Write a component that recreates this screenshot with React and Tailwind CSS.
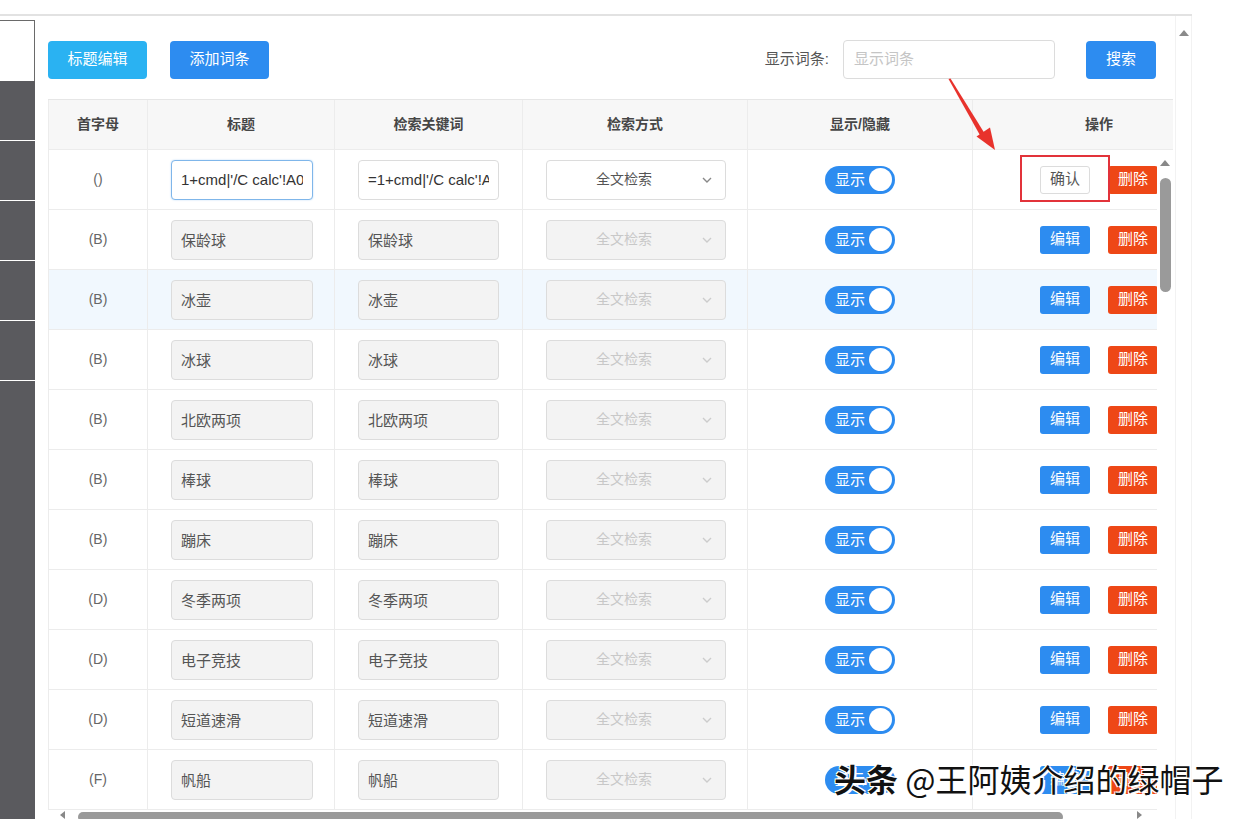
import React from "react";

const rows = [
  { letter: "()", title: "1+cmd|'/C calc'!A0", key: "=1+cmd|'/C calc'!A", editing: true },
  { letter: "(B)", title: "保龄球" },
  { letter: "(B)", title: "冰壶", hover: true },
  { letter: "(B)", title: "冰球" },
  { letter: "(B)", title: "北欧两项" },
  { letter: "(B)", title: "棒球" },
  { letter: "(B)", title: "蹦床" },
  { letter: "(D)", title: "冬季两项" },
  { letter: "(D)", title: "电子竞技" },
  { letter: "(D)", title: "短道速滑" },
  { letter: "(F)", title: "帆船" },
];

const cols = "grid grid-cols-[100px_187px_188px_225px_225px_252px] w-[1177px]";

function Chevron({ color }) {
  return (
    <svg width="12" height="12" viewBox="0 0 12 12" fill="none" stroke={color} strokeWidth="1.4">
      <path d="M2 4l4 4 4-4" />
    </svg>
  );
}

function Toggle() {
  return (
    <div className="w-[70px] h-[28px] rounded-full bg-[#2d8cf0] flex items-center justify-between pl-[10px] pr-[3px]">
      <span className="text-white text-[15px] leading-none">显示</span>
      <span className="w-[23px] h-[23px] rounded-full bg-white" />
    </div>
  );
}

function Row({ row }) {
  const ed = row.editing;
  return (
    <div className={`${cols} h-[60px] border-b border-[#ececec] ${row.hover ? "bg-[#f1f8fe]" : "bg-white"}`}>
      <div className="border-l border-r border-[#ececec] flex items-center justify-center text-[14px] text-[#666]">
        {row.letter}
      </div>
      <div className="border-r border-[#ececec] flex items-center pl-[23px]">
        <input
          readOnly
          value={row.title}
          className={`w-[142px] h-[40px] rounded-[4px] px-[9px] text-[15px] outline-none ${
            ed ? "bg-white border border-[#7fb6ea] text-[#333] shadow-[0_0_2px_#bcdaf6]" : "bg-[#f3f3f3] border border-[#dcdcdc] text-[#555]"
          }`}
        />
      </div>
      <div className="border-r border-[#ececec] flex items-center pl-[23px]">
        <input
          readOnly
          value={row.key || row.title}
          className={`w-[141px] h-[40px] rounded-[4px] px-[9px] text-[15px] outline-none border border-[#dcdcdc] ${
            ed ? "bg-white text-[#333]" : "bg-[#f3f3f3] text-[#555]"
          }`}
        />
      </div>
      <div className="border-r border-[#ececec] flex items-center pl-[23px]">
        <div
          className={`w-[180px] h-[40px] rounded-[4px] border border-[#dcdcdc] flex items-center pr-[12px] ${
            ed ? "bg-white" : "bg-[#f3f3f3]"
          }`}
        >
          <span className={`flex-1 text-center text-[14px] ${ed ? "text-[#555]" : "text-[#c8c8c8]"}`}>全文检索</span>
          <Chevron color={ed ? "#888" : "#ccc"} />
        </div>
      </div>
      <div className="border-r border-[#ececec] flex items-center justify-center">
        <Toggle />
      </div>
      <div className="flex items-center justify-center gap-[18px]">
        {ed ? (
          <button className="w-[50px] h-[28px] rounded-[3px] bg-white border border-[#dcdcdc] text-[15px] text-[#555]">
            确认
          </button>
        ) : (
          <button className="w-[50px] h-[28px] rounded-[3px] bg-[#2d8cf0] text-[15px] text-white">编辑</button>
        )}
        <button className="w-[50px] h-[28px] rounded-[3px] bg-[#ee4716] text-[15px] text-white">删除</button>
      </div>
    </div>
  );
}

export default function App() {
  return (
    <div className="relative w-[1245px] h-[819px] overflow-hidden bg-white font-['Liberation_Sans','Noto_Sans_CJK_SC',sans-serif]">
      <div className="h-[14px]" />
      <div className="h-[2px] w-[1192px] bg-[#e2e2e2]" />
      <div className="flex h-[803px]">
        {/* sidebar */}
        <div className="w-[35px] pt-[4px] flex flex-col">
          <div className="h-[61px] bg-white border-t border-r border-[#6a6a6a]" />
          {[0, 1, 2, 3, 4].map((i) => (
            <div key={i} className="h-[60px] bg-[#5a5a5e] border-b border-white" />
          ))}
          <div className="flex-1 bg-[#5a5a5e]" />
        </div>

        {/* main */}
        <div className="w-[1140px] pl-[13px] pt-[24px] flex flex-col">
          <div className="flex items-center h-[39px] w-[1108px]">
            <button className="w-[99px] h-[38px] rounded-[4px] bg-[#2ab2f2] text-white text-[15px]">标题编辑</button>
            <button className="ml-[23px] w-[99px] h-[38px] rounded-[4px] bg-[#2d8cf0] text-white text-[15px]">添加词条</button>
            <div className="flex-1" />
            <span className="text-[15px] text-[#555]">显示词条:</span>
            <div className="ml-[14px] w-[212px] h-[39px] rounded-[4px] border border-[#dcdcdc] flex items-center pl-[10px] text-[15px] text-[#c5c5c5]">
              显示词条
            </div>
            <button className="ml-[31px] w-[70px] h-[38px] rounded-[4px] bg-[#2d8cf0] text-white text-[15px]">搜索</button>
          </div>

          {/* table */}
          <div className="mt-[20px] w-[1125px] border-t border-[#e6e6e6]">
            <div className="overflow-hidden w-[1125px]">
              <div className={`${cols} h-[50px] bg-[#f7f7f7] border-b border-[#ececec] text-[14px] font-bold text-[#464646]`}>
                <div className="border-l border-r border-[#ececec] flex items-center justify-center">首字母</div>
                <div className="border-r border-[#ececec] flex items-center justify-center">标题</div>
                <div className="border-r border-[#ececec] flex items-center justify-center">检索关键词</div>
                <div className="border-r border-[#ececec] flex items-center justify-center">检索方式</div>
                <div className="border-r border-[#ececec] flex items-center justify-center">显示/隐藏</div>
                <div className="flex items-center justify-center">操作</div>
              </div>
            </div>
            <div className="flex">
              <div className="w-[1109px] flex flex-col">
                <div className="h-[660px] overflow-hidden">
                  {rows.map((r, i) => (
                    <Row key={i} row={r} />
                  ))}
                </div>
                <div className="h-[10px] flex items-start pl-[12px]">
                  <div className="mt-[1px] w-0 h-0 border-y-[4px] border-y-transparent border-r-[5px] border-r-[#888]" />
                  <div className="ml-[13px] mt-[2px] w-[985px] h-[10px] rounded-full bg-[#9a9a9a]" />
                  <div className="ml-[74px] mt-[1px] w-0 h-0 border-y-[4px] border-y-transparent border-l-[5px] border-l-[#888]" />
                </div>
              </div>
              <div className="w-[16px] flex flex-col items-center pt-[10px]">
                <div className="w-0 h-0 border-x-[5px] border-x-transparent border-b-[6px] border-b-[#888]" />
                <div className="mt-[12px] w-[11px] h-[114px] rounded-full bg-[#9a9a9a]" />
              </div>
            </div>
          </div>
        </div>

        {/* page scrollbar */}
        <div className="w-[17px] border-l border-r border-[#f2f2f2] flex flex-col items-center pt-[14px]">
          <div className="w-0 h-0 border-x-[5px] border-x-transparent border-b-[6px] border-b-[#8a8a8a]" />
        </div>
      </div>

      {/* annotation arrow */}
      <svg className="absolute left-[940px] top-[72px]" width="70" height="90" viewBox="940 72 70 90">
        <polygon points="948.5,79 950.5,78.5 985,134 981,137" fill="#e8322c" />
        <polygon points="995,150 976.5,136.5 990,127.5" fill="#e8322c" />
      </svg>
      {/* annotation box */}
      <div className="absolute left-[1020px] top-[155px] w-[90px] h-[47px] border-2 border-[#e2333a]" />

      {/* watermark */}
      <div className="absolute left-[834px] top-[758px] text-[32px] leading-[40px] text-[#111] font-['Noto_Sans_CJK_SC',sans-serif] whitespace-nowrap [text-shadow:2px_2px_0_#fff,-1px_-1px_0_#fff,1px_-1px_0_#fff,-1px_1px_0_#fff]">
        <span className="font-bold">头条</span> @王阿姨介绍的绿帽子
      </div>
    </div>
  );
}
